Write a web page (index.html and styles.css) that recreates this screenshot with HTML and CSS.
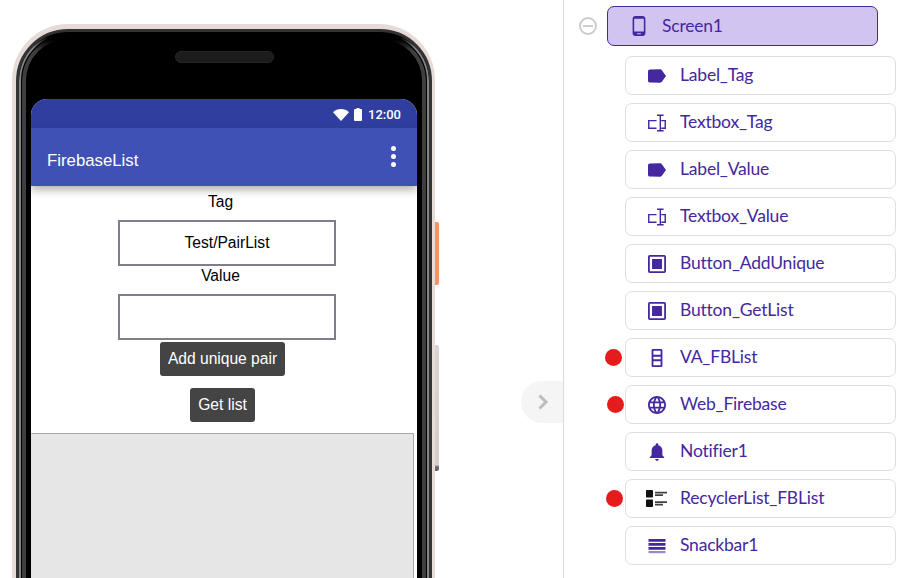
FILE: index.html
```html
<!DOCTYPE html>
<html lang="en">
<head>
<meta charset="utf-8">
<title>FirebaseList</title>
<link rel="stylesheet" href="styles.css">
</head>
<body>
<svg class="defs" width="0" height="0" aria-hidden="true">
  <symbol id="i-label" viewBox="3 2.500 19 19"><path d="M17.630 5.840C17.270 5.330 16.670 5 16 5L5 5.010C3.900 5.010 3 5.900 3 7v10c0 1.100.900 1.990 2 1.990L16 19c.670 0 1.270-.330 1.630-.840L22 12l-4.370-6.160z"/></symbol>
  <symbol id="i-textbox" viewBox="0 0 19 18"><path d="M9 6.500H.8v8H9M14 6.500h4.200v8H14M9.500.8h7M9.500 17.200h7M13 .8v16.400" fill="none" stroke="currentColor" stroke-width="1.500"/></symbol>
  <symbol id="i-button" viewBox="2 2 20 20"><path fill-rule="evenodd" d="M4 2h16a2 2 0 0 1 2 2v16a2 2 0 0 1-2 2H4a2 2 0 0 1-2-2V4a2 2 0 0 1 2-2zm0 2v16h16V4H4zm2.500 2.500h11v11h-11v-11z"/></symbol>
  <symbol id="i-arrangement" viewBox="2 2 20 20"><path fill-rule="evenodd" d="M7.500 2h9A1.500 1.500 0 0 1 18 3.500v17a1.500 1.500 0 0 1-1.500 1.500h-9A1.500 1.500 0 0 1 6 20.500v-17A1.500 1.500 0 0 1 7.500 2zM8 4v4.500h8V4H8zm0 6.500v3h8v-3H8zm0 5V20h8v-4.500H8z"/></symbol>
  <symbol id="i-web" viewBox="2 2 20 20"><path d="M11.990 2C6.470 2 2 6.480 2 12s4.470 10 9.990 10C17.520 22 22 17.520 22 12S17.520 2 11.990 2zm6.930 6h-2.950c-.320-1.250-.780-2.450-1.380-3.560 1.840.630 3.370 1.910 4.330 3.560zM12 4.040c.830 1.200 1.480 2.530 1.910 3.960h-3.820c.430-1.430 1.080-2.760 1.910-3.960zM4.260 14C4.100 13.360 4 12.690 4 12s.100-1.360.260-2h3.380c-.080.660-.140 1.320-.140 2 0 .680.060 1.340.140 2H4.260zm.820 2h2.950c.320 1.250.780 2.450 1.380 3.560-1.840-.630-3.370-1.900-4.330-3.560zm2.950-8H5.080c.960-1.660 2.490-2.930 4.330-3.560C8.810 5.550 8.350 6.750 8.030 8zM12 19.960c-.830-1.200-1.480-2.530-1.910-3.960h3.820c-.430 1.430-1.080 2.760-1.910 3.960zM14.340 14H9.660c-.090-.660-.160-1.320-.160-2 0-.680.070-1.350.160-2h4.680c.090.650.160 1.320.160 2 0 .680-.070 1.340-.160 2zm.250 5.560c.600-1.110 1.060-2.310 1.380-3.560h2.950c-.960 1.650-2.490 2.930-4.330 3.560zM16.360 14c.080-.660.140-1.320.140-2 0-.680-.060-1.340-.140-2h3.380c.160.640.260 1.310.260 2s-.100 1.360-.260 2h-3.380z"/></symbol>
  <symbol id="i-bell" viewBox="2 2.300 20 20"><path d="M12 22c1.100 0 2-.900 2-2h-4c0 1.100.890 2 2 2zm6-6v-5c0-3.070-1.640-5.640-4.500-6.320V4c0-.830-.670-1.500-1.500-1.500s-1.500.670-1.500 1.500v.680C7.630 5.360 6 7.920 6 11v5l-2 2v1h16v-1l-2-2z"/></symbol>
  <symbol id="i-list" viewBox="0 0 21 17"><rect x="0" y="0" width="7" height="7.500" rx=".8"/><rect x="0" y="9.500" width="7" height="7.500" rx=".8"/><path d="M9 1.800h12v1.600H9zM9 4.300h8v1.600H9zM9 11.300h12v1.600H9zM9 13.800h8v1.600H9z" opacity=".8"/></symbol>
  <symbol id="i-snack" viewBox="0 0 18 18"><path d="M.5 2h17v2.700H.5zM.5 6h17v2.700H.5zM.5 10h17v2.700H.5z"/><path d="M.5 14h17v2.200H.5z" opacity=".55"/></symbol>
</svg>

<main class="viewer">
  <div class="phone">
    <span class="side-key key-power"></span>
    <span class="side-key key-volume"></span>
    <div class="bezel">
      <div class="speaker"></div>
      <div class="screen">
        <div class="status-bar">
          <svg class="st-wifi" viewBox="0 0 16 12"><path d="M8 12 0 3.200C2.200 1.200 5 0 8 0s5.800 1.200 8 3.200L8 12z"/></svg>
          <svg class="st-batt" viewBox="0 0 8 13"><path d="M2.500 0h3v1H7a1 1 0 0 1 1 1v10a1 1 0 0 1-1 1H1a1 1 0 0 1-1-1V2a1 1 0 0 1 1-1h1.500z"/></svg>
          <span class="st-time">12:00</span>
        </div>
        <div class="app-bar">
          <span class="app-title">FirebaseList</span>
          <span class="overflow"><i></i><i></i><i></i></span>
        </div>
        <div class="form">
          <div class="lbl lbl-tag">Tag</div>
          <div class="textbox">Test/PairList</div>
          <div class="lbl lbl-value">Value</div>
          <div class="textbox"></div>
          <button class="btn btn-add" type="button">Add unique pair</button>
          <button class="btn btn-get" type="button">Get list</button>
          <div class="list-area"></div>
        </div>
      </div>
    </div>
  </div>
  <div class="collapse-tab">
    <svg viewBox="0 0 12 16" width="12" height="16"><path d="M2.500 1.500 9 8l-6.500 6.500" fill="none" stroke="#bdbdbd" stroke-width="3"/></svg>
  </div>
</main>

<aside class="tree">
  <div class="root-row">
    <span class="toggle"></span>
    <div class="node node-root">
      <svg class="ico-root" viewBox="0 0 24 24"><path d="M16 1H8C6.340 1 5 2.340 5 4v16c0 1.660 1.340 3 3 3h8c1.660 0 3-1.340 3-3V4c0-1.660-1.340-3-3-3zm-2 20h-4v-1h4v1zm3.250-3H6.750V4h10.500v14z"/></svg>
      <span>Screen1</span>
    </div>
  </div>
  <ul class="children">
    <li class="node"><svg class="ico"><use href="#i-label"/></svg><span>Label_Tag</span></li>
    <li class="node"><svg class="ico"><use href="#i-textbox"/></svg><span>Textbox_Tag</span></li>
    <li class="node"><svg class="ico"><use href="#i-label"/></svg><span>Label_Value</span></li>
    <li class="node"><svg class="ico"><use href="#i-textbox"/></svg><span>Textbox_Value</span></li>
    <li class="node"><svg class="ico"><use href="#i-button"/></svg><span>Button_AddUnique</span></li>
    <li class="node"><svg class="ico"><use href="#i-button"/></svg><span>Button_GetList</span></li>
    <li class="node"><b class="dot dot-a"></b><svg class="ico"><use href="#i-arrangement"/></svg><span>VA_FBList</span></li>
    <li class="node"><b class="dot dot-b"></b><svg class="ico"><use href="#i-web"/></svg><span>Web_Firebase</span></li>
    <li class="node"><svg class="ico"><use href="#i-bell"/></svg><span>Notifier1</span></li>
    <li class="node"><b class="dot dot-c"></b><svg class="ico ico-black"><use href="#i-list"/></svg><span>RecyclerList_FBList</span></li>
    <li class="node"><svg class="ico"><use href="#i-snack"/></svg><span>Snackbar1</span></li>
  </ul>
</aside>
</body>
</html>
```

FILE: styles.css
```css
* { box-sizing: border-box; }
html, body { margin: 0; padding: 0; }
body {
  width: 906px;
  height: 578px;
  overflow: hidden;
  display: flex;
  background: #fff;
  font-family: "Liberation Sans", Arial, sans-serif;
}
.defs { position: absolute; }

/* left: viewer with phone */
.viewer {
  position: relative;
  flex: 0 0 564px;
  height: 578px;
  overflow: hidden;
  border-right: 1px solid #dcdcdc;
  padding: 24px 0 0 12px;
}
.phone {
  position: relative;
  width: 423px;
  height: 760px;
  border: solid #e6dbd7;
  border-width: 5px 3px 4px 4px;
  border-radius: 56px;
}
.bezel {
  position: relative;
  height: 100%;
  border: 3px solid #333;
  border-radius: 52px;
  background: #000;
  padding: 67px 12px 0;
}
.bezel::before,
.bezel::after {
  content: "";
  position: absolute;
  -webkit-mask-image: linear-gradient(to bottom, transparent 5px, #000 16px);
  mask-image: linear-gradient(to bottom, transparent 5px, #000 16px);
}
.bezel::before {
  inset: 0;
  border: 2px solid #858585;
  border-radius: 49px;
}
.bezel::after {
  inset: 3px;
  border: 4px solid #3f3f3f;
  border-radius: 46px;
}
.speaker {
  position: absolute;
  left: 156px;
  top: 19px;
  width: 99px;
  height: 12px;
  border-radius: 6px;
  background: #1c1c1c;
  border: 1px solid #262626;
}
.side-key {
  position: absolute;
  left: 419px;
  width: 4px;
  border-radius: 0 2px 2px 0;
}
.key-power { top: 193px; height: 63px; background: #f29463; }
.key-volume { top: 316px; height: 126px; background: linear-gradient(#dcd2cf, #d6cdcb 95%, #666 97%); }

.screen {
  position: relative;
  z-index: 1;
  width: 386px;
  height: 640px;
  border-radius: 16px 16px 0 0;
  overflow: hidden;
  background: #fff;
}
.status-bar {
  height: 29px;
  background: #303f9f;
  display: flex;
  align-items: center;
  justify-content: flex-end;
  padding: 2px 16px 0 0;
  color: #fff;
}
.status-bar svg { fill: #fff; display: block; }
.st-wifi { width: 16px; height: 12px; margin-right: 5px; }
.st-batt { width: 8px; height: 13px; margin-right: 6px; }
.st-time { font: 500 13px/1 Roboto, sans-serif; }
.app-bar {
  position: relative;
  z-index: 1;
  height: 58px;
  background: #3f51b5;
  box-shadow: 0 4px 8px rgba(0,0,0,.3);
  display: flex;
  align-items: center;
  justify-content: space-between;
  padding: 7px 21px 0 16px;
  color: #fff;
}
.app-title { font-size: 16.800px; }
.overflow { display: flex; flex-direction: column; gap: 3px; margin-top: -9px; }
.overflow i { width: 5px; height: 5px; border-radius: 50%; background: #fff; }

.form {
  width: 383px;
  display: flex;
  flex-direction: column;
  align-items: center;
  font-size: 15.600px;
  color: #000;
}
.lbl { line-height: 20px; }
.lbl-tag { margin: 6px 0 0 -4px; height: 18px; }
.lbl-value { margin: 0 0 0 -4px; height: 28px; }
.textbox {
  width: 218px;
  height: 46px;
  margin: 10px 0 0 9px;
  border: 2px solid #7f7f8c;
  display: flex;
  align-items: center;
  justify-content: center;
  background: #fff;
}
.lbl-value + .textbox { margin-top: 0; }
.btn {
  height: 34px;
  border: 0;
  border-radius: 3px;
  background: #444;
  color: #fff;
  font: 15.600px "Liberation Sans", Arial, sans-serif;
  padding: 0 8px;
}
.btn-add { margin-top: 2px; }
.btn-get { margin-top: 12px; }
.list-area {
  width: 100%;
  height: 300px;
  margin-top: 11px;
  background: #e6e6e6;
  border: 1px solid #a9a9a9;
  border-left-color: #e6e6e6;
}

.collapse-tab {
  position: absolute;
  right: 0;
  top: 381px;
  width: 42px;
  height: 42px;
  border-radius: 21px 0 0 21px;
  background: #f5f5f5;
  display: flex;
  align-items: center;
  padding-left: 16px;
}

/* right: component tree */
.tree {
  flex: 1;
  padding: 6px 10px 0 15px;
  font-family: Lato, "Open Sans", sans-serif;
  font-size: 17.500px;
  letter-spacing: -.2px;
  color: #4527a0;
}
.root-row { display: flex; align-items: center; }
.toggle {
  position: relative;
  width: 18px;
  height: 18px;
  border: 2px solid #cccccc;
  border-radius: 50%;
  margin-right: 10px;
}
.toggle::after {
  content: "";
  position: absolute;
  left: 2px;
  right: 2px;
  top: 6px;
  height: 2px;
  background: #cccccc;
}
.node {
  position: relative;
  display: flex;
  align-items: center;
  height: 39px;
  border: 1px solid #dedede;
  border-radius: 7px;
  background: #fff;
  padding: 0 0 2px 20px;
}
.node-root {
  width: 271px;
  height: 40px;
  background: #d1c4f0;
  border-color: #4527a0;
}
.ico {
  flex: none;
  width: 18px;
  height: 18px;
  margin: 2px 14px 0 2px;
  fill: #4527a0;
  color: #4527a0;
}
.ico-root {
  flex: none;
  width: 22px;
  height: 22px;
  margin: 2px 12px 0 0;
  fill: #4527a0;
}
.ico-black { width: 21px; height: 17px; margin: 2px 13px 0 0; fill: #111; }
.children {
  list-style: none;
  margin: 10px 0 0 46px;
  padding: 0;
  display: flex;
  flex-direction: column;
  gap: 8px;
}
.dot {
  position: absolute;
  top: 10px;
  width: 17px;
  height: 17px;
  border-radius: 50%;
  background: #e61c1c;
}
.dot-a { left: -21px; }
.dot-b { left: -19px; }
.dot-c { left: -20px; }
```
